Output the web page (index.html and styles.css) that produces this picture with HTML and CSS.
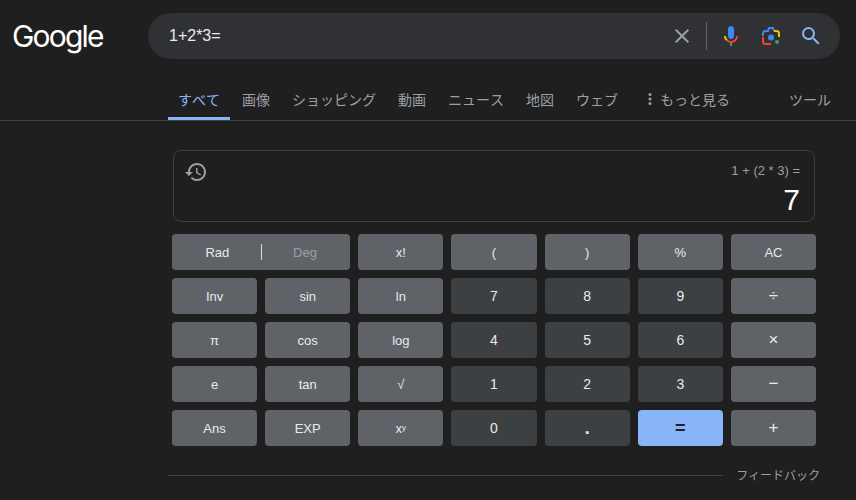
FILE: index.html
```html
<!DOCTYPE html>
<html lang="ja">
<head>
    <meta charset="UTF-8">
    <meta name="viewport" content="width=device-width, initial-scale=1.0">
    <title>1+2*3= - Google 検索</title>
    <link rel="stylesheet" href="styles.css">
</head>
<body>
    <header class="top_bar">
        <a class="logo" href="#">Google</a>
        <form class="search_box">
            <span class="search_text">1+2*3=</span>
            <svg class="search_icon clear_icon" viewBox="0 0 24 24"><path d="M19 6.41 17.59 5 12 10.59 6.41 5 5 6.41 10.59 12 5 17.59 6.41 19 12 13.41 17.59 19 19 17.59 13.41 12z"/></svg>
            <span class="search_divider"></span>
            <svg class="search_icon mic_icon" viewBox="0 0 24 24">
                <path fill="#4285f4" d="M12 15c1.66 0 3-1.31 3-2.97V5.01C15 3.35 13.66 2 12 2S9 3.34 9 5.01v7.02C9 13.69 10.34 15 12 15z"/>
                <path fill="#34a853" d="M11 18.08h2V22h-2z"/>
                <path fill="#fbbc05" d="M7.05 16.87C5.78 15.54 5 14.04 5 12h2c0 1.45.56 2.42 1.47 3.38v.32l-1.15 1.18z"/>
                <path fill="#ea4335" d="M12 16.93a4.97 5.25 0 0 1-3.54-1.55l-1.41 1.49C8.31 18.21 10.07 19 12 19c3.87 0 6.99-2.92 6.99-6.99h-2c0 2.92-2.24 4.92-4.99 4.92z"/>
            </svg>
            <svg class="search_icon lens_icon" viewBox="0 0 24 24" fill="none" stroke-width="2">
                <path stroke="#4285f4" d="M4 12V9.5A2.5 2.5 0 0 1 6.5 7H9l1-3h4l1 3"/>
                <path stroke="#fbbc05" d="M15 7h2.500A2.500 2.500 0 0 1 20 9.500V13"/>
                <path stroke="#ea4335" d="M4 13v4.500A2.500 2.500 0 0 0 6.500 20H12"/>
                <circle fill="#4285f4" stroke="none" cx="12" cy="13.500" r="3"/>
                <circle fill="#34a853" stroke="none" cx="18" cy="18" r="2"/>
            </svg>
            <svg class="search_icon magnify_icon" viewBox="0 0 24 24"><path d="M15.5 14h-.79l-.28-.27A6.471 6.471 0 0 0 16 9.500 6.500 6.500 0 1 0 9.500 16c1.610 0 3.090-.59 4.230-1.570l.27.28v.79l5 4.990L20.490 19l-4.990-5zm-6 0C7.010 14 5 11.990 5 9.500S7.010 5 9.500 5 14 7.010 14 9.500 11.990 14 9.500 14z"/></svg>
        </form>
    </header>

    <nav class="tabs">
        <a class="tab active" href="#">すべて</a>
        <a class="tab" href="#">画像</a>
        <a class="tab" href="#">ショッピング</a>
        <a class="tab" href="#">動画</a>
        <a class="tab" href="#">ニュース</a>
        <a class="tab" href="#">地図</a>
        <a class="tab" href="#">ウェブ</a>
        <a class="tab more_tab" href="#">
            <svg class="more_icon" viewBox="0 0 20 20"><circle cx="10" cy="5.500" r="1.500"/><circle cx="10" cy="10" r="1.500"/><circle cx="10" cy="14.500" r="1.500"/></svg>
            もっと見る
        </a>
        <a class="tab tools_tab" href="#">ツール</a>
    </nav>

    <main class="calculator">
        <section class="display">
            <svg class="history_icon" viewBox="0 0 24 24"><path d="M13 3c-4.970 0-9 4.030-9 9H1l3.890 3.890.07.14L9 12H6c0-3.870 3.130-7 7-7s7 3.130 7 7-3.130 7-7 7c-1.930 0-3.680-.79-4.940-2.060l-1.420 1.420C8.270 19.990 10.510 21 13 21c4.970 0 9-4.030 9-9s-4.030-9-9-9zm-1 5v5l4.280 2.540.72-1.210-3.500-2.080V8H12z"/></svg>
            <div class="display_text">
                <div class="expression">1 + (2 * 3) =</div>
                <div class="result">7</div>
            </div>
        </section>

        <section class="keys">
            <div class="key fn wide"><span class="unit">Rad</span><span class="unit_line"></span><span class="unit off">Deg</span></div>
            <div class="key fn">x!</div>
            <div class="key fn">(</div>
            <div class="key fn">)</div>
            <div class="key fn">%</div>
            <div class="key fn">AC</div>

            <div class="key fn">Inv</div>
            <div class="key fn">sin</div>
            <div class="key fn">ln</div>
            <div class="key num">7</div>
            <div class="key num">8</div>
            <div class="key num">9</div>
            <div class="key fn op">÷</div>

            <div class="key fn">π</div>
            <div class="key fn">cos</div>
            <div class="key fn">log</div>
            <div class="key num">4</div>
            <div class="key num">5</div>
            <div class="key num">6</div>
            <div class="key fn op">×</div>

            <div class="key fn">e</div>
            <div class="key fn">tan</div>
            <div class="key fn">√</div>
            <div class="key num">1</div>
            <div class="key num">2</div>
            <div class="key num">3</div>
            <div class="key fn op">−</div>

            <div class="key fn">Ans</div>
            <div class="key fn">EXP</div>
            <div class="key fn">x<sup>y</sup></div>
            <div class="key num">0</div>
            <div class="key num dot">.</div>
            <div class="key equals">=</div>
            <div class="key fn op">+</div>
        </section>
    </main>

    <footer class="feedback">
        <span class="feedback_line"></span>
        <a class="feedback_link" href="#">フィードバック</a>
    </footer>
</body>
</html>
```

FILE: styles.css
```css
body {
    font-family: "Liberation Sans", "Noto Sans CJK JP", sans-serif;
    margin: 0;
    padding: 0;
    background-color: #1f1f1f;
    color: #e8eaed;
    overflow: hidden;
}

a {
    text-decoration: none;
}

.top_bar {
    display: flex;
    align-items: center;
    padding: 13px 16px 0 12px;
}

.logo {
    width: 136px;
    color: #fff;
    font-family: Inter, sans-serif;
    font-size: 30px;
    line-height: 46px;
    letter-spacing: -1.8px;
}

.search_box {
    display: flex;
    align-items: center;
    width: 692px;
    height: 46px;
    margin: 0;
    padding: 0 17px 0 21px;
    box-sizing: border-box;
    background-color: #303134;
    border-radius: 23px;
}

.search_text {
    flex: 1;
    font-size: 16px;
    color: #e8eaed;
}

.search_icon {
    width: 24px;
    height: 24px;
    flex-shrink: 0;
}

.clear_icon {
    fill: #9aa0a6;
}

.search_divider {
    width: 1px;
    height: 28px;
    margin: 0 12px;
    background-color: #5f6368;
}

.lens_icon {
    margin-left: 16px;
}

.magnify_icon {
    margin-left: 16px;
    fill: #8ab4f8;
}

.tabs {
    display: flex;
    gap: 2px;
    height: 40px;
    margin-top: 21px;
    padding: 0 15px 0 168px;
    border-bottom: 1px solid #3c4043;
    font-kerning: none;
}

.tab {
    display: flex;
    align-items: center;
    height: 37px;
    padding: 0 10px 3px;
    font-size: 14px;
    color: #9aa0a6;
    white-space: nowrap;
}

.tab.active {
    color: #8ab4f8;
    border-bottom: 3px solid #8ab4f8;
    padding-bottom: 0;
}

.more_icon {
    width: 20px;
    height: 20px;
    fill: #9aa0a6;
}

.tools_tab {
    margin-left: auto;
}

.calculator {
    width: 644px;
    margin: 29px 0 0 172px;
}

.display {
    display: flex;
    justify-content: space-between;
    height: 72px;
    margin: 0 1px;
    padding: 9px 14px 0 10px;
    box-sizing: border-box;
    border: 1px solid #3c4043;
    border-radius: 8px;
}

.history_icon {
    width: 24px;
    height: 24px;
    fill: #9aa0a6;
}

.display_text {
    text-align: right;
}

.expression {
    font-size: 13px;
    line-height: 22px;
    color: #9aa0a6;
}

.result {
    font-size: 30px;
    line-height: 36px;
    color: #fff;
}

.keys {
    display: grid;
    grid-template-columns: repeat(7, 1fr);
    grid-auto-rows: 36px;
    gap: 8px;
    margin-top: 12px;
}

.key {
    display: flex;
    align-items: center;
    justify-content: center;
    border-radius: 4px;
    font-size: 13px;
}

.fn {
    background-color: #5f6368;
}

.num {
    background-color: #3c4043;
    font-size: 14px;
}

.op {
    font-size: 17px;
}

.dot {
    font-size: 18px;
    font-weight: bold;
}

.equals {
    background-color: #8ab4f8;
    color: #202124;
    font-size: 18px;
    font-weight: bold;
}

.wide {
    grid-column: span 2;
    padding: 0 2px;
}

.unit {
    flex: 1;
    text-align: center;
}

.unit.off {
    color: #9aa0a6;
}

.unit_line {
    width: 1px;
    height: 16px;
    background-color: #dadce0;
}

sup {
    font-size: 8px;
    line-height: 0;
    vertical-align: 5px;
}

.feedback {
    display: flex;
    align-items: center;
    gap: 13px;
    width: 652px;
    margin: 19px 0 0 168px;
}

.feedback_line {
    flex: 1;
    height: 1px;
    background-color: #3c4043;
}

.feedback_link {
    padding-top: 2px;
    font-size: 12px;
    line-height: 18px;
    color: #9aa0a6;
}
```
